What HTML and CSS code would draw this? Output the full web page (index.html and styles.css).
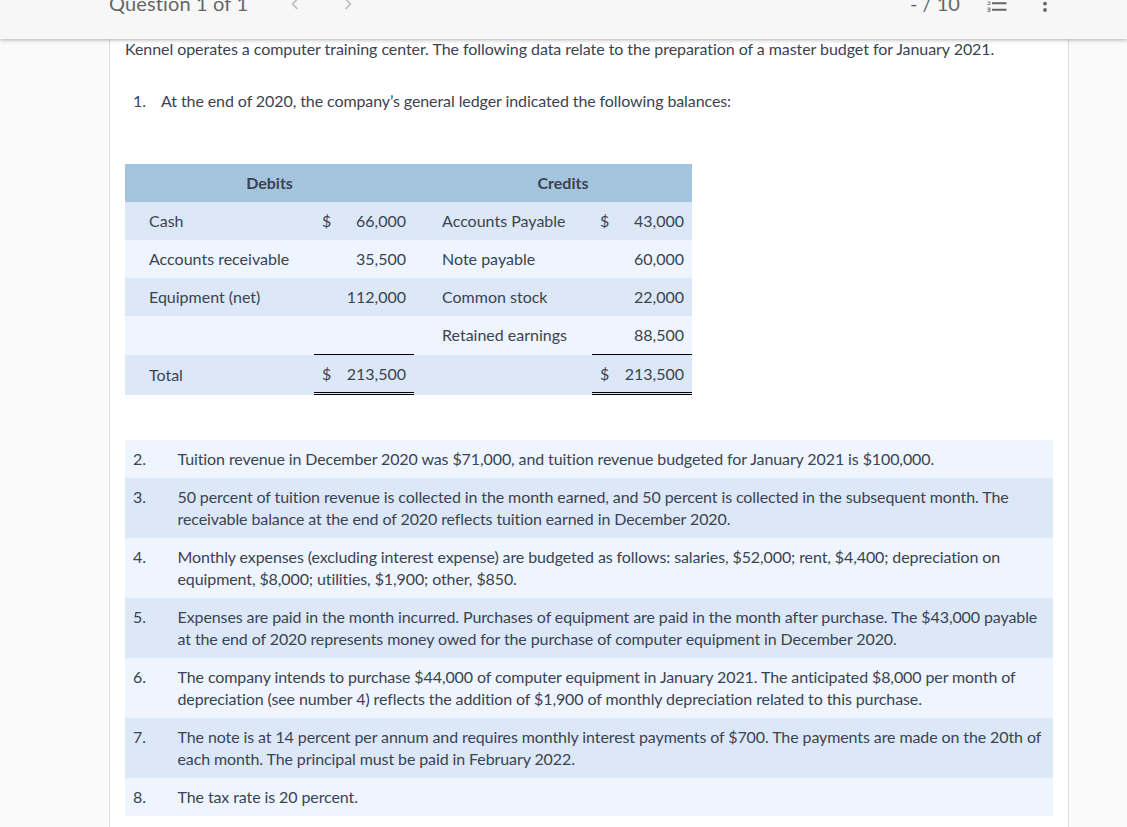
FILE: index.html
```html
<!DOCTYPE html>
<html lang="en">
<head>
  <meta charset="UTF-8">
  <title>Question 1 of 1</title>
  <link rel="stylesheet" href="styles.css">
</head>
<body>
  <header class="topbar">
    <div class="topbar-row">
      <span class="question-title">Question 1 of 1</span>
      <svg class="chevron chevron-prev" width="8" height="12" viewBox="0 0 8 12"><path d="M6.5 1 L1.5 6 L6.5 11"/></svg>
      <svg class="chevron chevron-next" width="8" height="12" viewBox="0 0 8 12"><path d="M1.5 1 L6.5 6 L1.5 11"/></svg>
      <span class="score">- / 10</span>
      <svg class="list-icon" width="20" height="14" viewBox="0 0 20 14">
        <path d="M5 3.3 H19.5 M5 9.7 H19.5"/>
        <path class="list-nums" d="M0.5 2 H3 V4.5 H0.5 M0.5 8 H3 V11.5 H0.5 M0.5 9.7 H3"/>
      </svg>
      <svg class="more-icon" width="6" height="14" viewBox="0 0 6 14">
        <circle cx="3" cy="3.6" r="1.9"/>
        <circle cx="3" cy="10" r="1.9"/>
      </svg>
    </div>
  </header>

  <main class="panel">
    <p class="intro">Kennel operates a computer training center. The following data relate to the preparation of a master budget for January 2021.</p>

    <div class="first-item">
      <span class="first-num">1.</span>
      <span>At the end of 2020, the company’s general ledger indicated the following balances:</span>
    </div>

    <table class="ledger">
      <colgroup>
        <col class="col-label">
        <col class="col-dollar">
        <col class="col-amount">
        <col class="col-gap">
        <col class="col-label-2">
        <col class="col-dollar">
        <col class="col-amount">
      </colgroup>
      <thead>
        <tr>
          <th colspan="3">Debits</th>
          <th></th>
          <th colspan="3">Credits</th>
        </tr>
      </thead>
      <tbody>
        <tr class="dark">
          <td class="label">Cash</td><td class="dollar">$</td><td class="amount">66,000</td>
          <td></td>
          <td class="label-2">Accounts Payable</td><td class="dollar">$</td><td class="amount">43,000</td>
        </tr>
        <tr>
          <td class="label">Accounts receivable</td><td></td><td class="amount">35,500</td>
          <td></td>
          <td class="label-2">Note payable</td><td></td><td class="amount">60,000</td>
        </tr>
        <tr class="dark">
          <td class="label">Equipment (net)</td><td></td><td class="amount">112,000</td>
          <td></td>
          <td class="label-2">Common stock</td><td></td><td class="amount">22,000</td>
        </tr>
        <tr class="before-total">
          <td></td><td class="rule"></td><td class="rule"></td>
          <td></td>
          <td class="label-2">Retained earnings</td><td class="rule"></td><td class="amount rule">88,500</td>
        </tr>
        <tr class="dark total">
          <td class="label">Total</td><td class="dollar double">$</td><td class="amount double">213,500</td>
          <td></td>
          <td></td><td class="dollar double">$</td><td class="amount double">213,500</td>
        </tr>
      </tbody>
    </table>

    <ol class="notes">
      <li><span class="num">2.</span><span>Tuition revenue in December 2020 was $71,000, and tuition revenue budgeted for January 2021 is $100,000.</span></li>
      <li class="dark"><span class="num">3.</span><span>50 percent of tuition revenue is collected in the month earned, and 50 percent is collected in the subsequent month. The receivable balance at the end of 2020 reflects tuition earned in December 2020.</span></li>
      <li><span class="num">4.</span><span>Monthly expenses (excluding interest expense) are budgeted as follows: salaries, $52,000; rent, $4,400; depreciation on equipment, $8,000; utilities, $1,900; other, $850.</span></li>
      <li class="dark"><span class="num">5.</span><span>Expenses are paid in the month incurred. Purchases of equipment are paid in the month after purchase. The $43,000 payable at the end of 2020 represents money owed for the purchase of computer equipment in December 2020.</span></li>
      <li><span class="num">6.</span><span>The company intends to purchase $44,000 of computer equipment in January 2021. The anticipated $8,000 per month of depreciation (see number 4) reflects the addition of $1,900 of monthly depreciation related to this purchase.</span></li>
      <li class="dark"><span class="num">7.</span><span>The note is at 14 percent per annum and requires monthly interest payments of $700. The payments are made on the 20th of each month. The principal must be paid in February 2022.</span></li>
      <li><span class="num">8.</span><span>The tax rate is 20 percent.</span></li>
    </ol>
  </main>
</body>
</html>
```

FILE: styles.css
```css
html, body {
  height: 100%;
}

body {
  margin: 0;
  background-color: #fafafa;
  color: #3b4350;
  font-family: Lato, "Open Sans", sans-serif;
  font-size: 16px;
  line-height: 22px;
  overflow: hidden;
  display: flex;
  flex-direction: column;
}

/* top bar, scrolled so the title is cut off by the window */
.topbar {
  flex: none;
  height: 39px;
  background-color: #f7f7f7;
  box-shadow: 0 1px 4px rgba(0, 0, 0, 0.3);
  position: relative;
  z-index: 1;
  color: #666;
}

.topbar-row {
  display: flex;
  align-items: center;
  height: 6px;
  padding-left: 109px;
}

.question-title {
  font-size: 20px;
  letter-spacing: 0.14px;
  width: 182px;
  white-space: nowrap;
}

.chevron {
  flex: none;
  fill: none;
  stroke: #c4c4c4;
  stroke-width: 1.8;
  margin-top: 2px;
}

.chevron-next {
  margin-left: 45px;
}

.score {
  font-size: 20px;
  margin-left: 558px;
  width: 77px;
  white-space: nowrap;
}

.list-icon {
  flex: none;
  stroke: #666;
  stroke-width: 2;
  fill: none;
  margin-top: 8px;
}

.list-icon .list-nums {
  stroke-width: 0.8;
}

.more-icon {
  flex: none;
  fill: #666;
  margin-left: 35px;
  margin-top: 8px;
}

.panel {
  flex: 1;
  width: 928px;
  margin-left: 109px;
  padding: 0 15px;
  background-color: #fff;
  border-left: 1px solid #ddd;
  border-right: 1px solid #ddd;
}

.intro {
  margin: -1px 0 0;
  letter-spacing: -0.06px;
}

.first-item {
  display: flex;
  margin-top: 30px;
  padding-left: 8px;
  letter-spacing: -0.09px;
}

.first-num {
  width: 28px;
}

.ledger {
  margin-top: 52px;
  width: 567px;
  table-layout: fixed;
  border-collapse: separate;
  border-spacing: 0;
  background-color: #eef5fe;
}

.col-label { width: 189px; }
.col-dollar { width: 28px; }
.col-amount { width: 72px; }
.col-gap { width: 20px; }
.col-label-2 { width: 158px; }

.ledger th {
  height: 38px;
  padding: 0;
  background-color: #a4c4de;
  font-weight: 700;
}

.ledger td {
  height: 38px;
  padding: 0;
  box-sizing: border-box;
}

.ledger .dark td {
  background-color: #dce8f8;
}

.ledger .before-total td {
  height: 39px;
  border-bottom: 1px solid transparent;
}

.ledger .before-total td.rule {
  border-bottom-color: #000;
}

.ledger .total td {
  height: 40px;
}

.label {
  padding-left: 24px !important;
}

.label-2 {
  padding-left: 8px !important;
  white-space: nowrap;
}

.dollar {
  padding-left: 8px !important;
}

.amount {
  text-align: right;
  padding-right: 8px !important;
}

.double {
  border-bottom: 3px double #000;
}

.notes {
  list-style: none;
  margin: 45px 0 0;
  padding: 0;
  letter-spacing: -0.1px;
}

.notes li {
  display: flex;
  padding: 8px 0 8px 8px;
  background-color: #eef5fe;
}

.notes li.dark {
  background-color: #dce8f8;
}

.num {
  flex: none;
  width: 44.5px;
}
```
